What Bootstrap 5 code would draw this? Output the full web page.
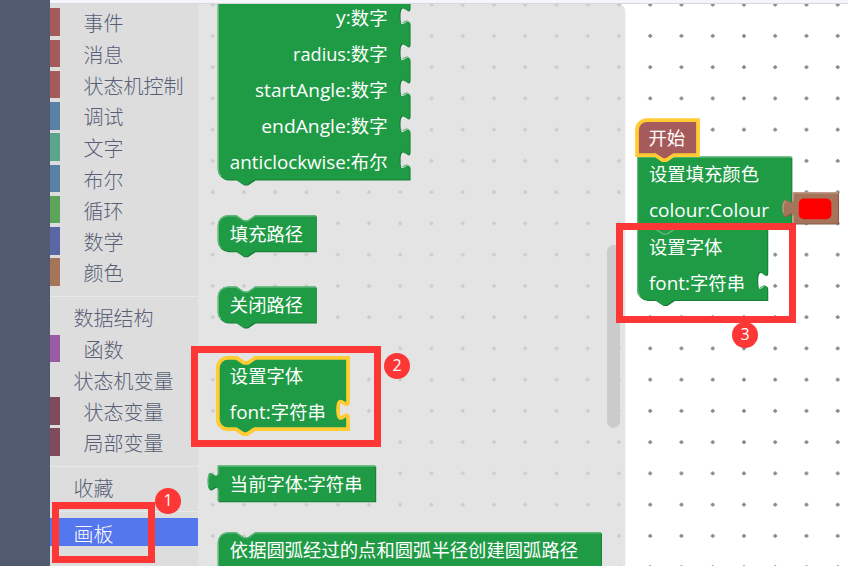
<!DOCTYPE html>
<html lang="zh-CN">
<head>
<meta charset="utf-8">
<meta name="viewport" content="width=device-width, initial-scale=1">
<title>画板</title>
<link href="https://cdn.jsdelivr.net/npm/bootstrap@5.3.0/dist/css/bootstrap.min.css" rel="stylesheet">
<style>
body{font-family:"Open Sans","Noto Sans CJK SC",sans-serif;background:#fff}
.topline{height:4px;background:#f5f6f9;border-bottom:1px solid #d6d8dd}
.rail{width:50px;background:#515a6e}
.toolbox{width:148px;background:#ddd;padding-top:4.4px;color:#575e75}
.cat{height:27.5px;margin-bottom:3.75px;padding-left:23.5px;border-left:0 solid;font-family:"Noto Sans CJK SC",sans-serif;font-weight:300;font-size:20px;line-height:29.5px;white-space:nowrap}
.cat.bar{border-left-width:10px}
.c-red{border-color:#a55b5b}.c-blue{border-color:#5b80a5}.c-teal{border-color:#5ba58c}.c-green{border-color:#5ba55b}
.c-indigo{border-color:#5b67a5}.c-brown{border-color:#a5745b}.c-purple{border-color:#995ba5}.c-wine{border-color:#804a5f}
.cat.chosen{background:#5577ee;color:#fff;line-height:31px}
.rule{height:1.25px;margin:10px 0 6.25px;background:#e8e8e8}
.canvas{display:block;width:650px;height:562px}
.canvas text{font-family:"Open Sans","Noto Sans CJK SC",sans-serif;font-size:18.33px;fill:#fff}
.canvas .zh{font-family:"Noto Sans CJK SC",sans-serif}
.g{fill:#1f9b45}.gd{fill:#197c37}.gl{fill:none;stroke:#62b97d;stroke-width:1}
.sel{stroke:#fc3;stroke-width:3}
.frame{border:7px solid #fd3736}
.num{width:26px;height:26px;background:#fd3736;color:#fff;font-size:16px;line-height:24px}
.f1{left:52px;top:502px;width:103px;height:61px}.n1{left:155px;top:488px}
.f2{left:191px;top:346px;width:190px;height:101px}.n2{left:384px;top:353px}
.f3{left:616px;top:223px;width:180px;height:100px}.n3{left:732px;top:322px}
</style>
<script src="https://cdn.jsdelivr.net/npm/bootstrap@5.3.0/dist/js/bootstrap.bundle.min.js"></script>
</head>
<body class="vh-100 overflow-hidden position-relative">
<div class="d-flex h-100">
  <aside class="rail flex-shrink-0"></aside>
  <main class="flex-grow-1 d-flex flex-column">
    <div class="topline flex-shrink-0"></div>
    <div class="d-flex flex-grow-1 overflow-hidden">
      <nav class="toolbox flex-shrink-0">
        <div class="cat bar c-red">事件</div>
        <div class="cat bar c-red">消息</div>
        <div class="cat bar c-red">状态机控制</div>
        <div class="cat bar c-blue">调试</div>
        <div class="cat bar c-teal">文字</div>
        <div class="cat bar c-blue">布尔</div>
        <div class="cat bar c-green">循环</div>
        <div class="cat bar c-indigo">数学</div>
        <div class="cat bar c-brown">颜色</div>
        <div class="rule"></div>
        <div class="cat">数据结构</div>
        <div class="cat bar c-purple">函数</div>
        <div class="cat">状态机变量</div>
        <div class="cat bar c-wine">状态变量</div>
        <div class="cat bar c-wine">局部变量</div>
        <div class="rule"></div>
        <div class="cat">收藏</div>
        <div class="rule"></div>
        <div class="cat chosen">画板</div>
      </nav>
      <svg class="canvas flex-shrink-0" viewBox="198 4 650 562">
        <defs>
          <pattern id="dots" x="197.1" y="-11" width="31.25" height="31.25" patternUnits="userSpaceOnUse"><path d="M13.6 15.7h4M15.6 13.7v4" stroke="#888" stroke-width="1.6"/><circle cx="15.6" cy="15.7" r="1.4" fill="#888"/></pattern>
          <path id="arc" d="M0,-40 H153.5 V5.2 c0,10 -8,-8 -8,7.5 s8,-2.5 8,7.5 V34 c0,10 -8,-8 -8,7.5 s8,-2.5 8,7.5 v13.8 c0,10 -8,-8 -8,7.5 s8,-2.5 8,7.5 v13.8 c0,10 -8,-8 -8,7.5 s8,-2.5 8,7.5 v13.8 c0,10 -8,-8 -8,7.5 s8,-2.5 8,7.5 V143.5 H29.5 l-6,4 -3,0 -6,-4 H8 a8,8 0 0 1 -8,-8 z"/>
          <path id="one" d="M0,8 A8,8 0 0 1 8,0 H15 l6,4 3,0 6,-4 H78.5 V28.7 H29.5 l-6,4 -3,0 -6,-4 H8 a8,8 0 0 1 -8,-8 z"/>
          <path id="onelight" d="M2.7,26.1 A7.5,7.5 0 0 1 .5,21 V8 A7.5,7.5 0 0 1 8,.5 H15 l6,4 3,0 6,-4 H78.5"/>
        </defs>
        <rect x="198" y="4" width="650" height="562" fill="url(#dots)"/>
        <path d="M198,4 H619 a8,8 0 0 1 6.3,8 V566 H198z" fill="#ddd" fill-opacity=".8"/>
        <rect x="607" y="245" width="13" height="183" rx="6.5" fill="#cbcbcb"/>

        <g transform="translate(217.7,0) scale(1.25)">
          <use href="#arc" class="gd" transform="translate(.8,.8)"/><use href="#arc" class="g"/>
          <path class="gl" d="M2.7,141 A7.5,7.5 0 0 1 .5,135.5 V0 M147.8,18.2 l4,-1.8 M147.8,47 l4,-1.8 M147.8,75.8 l4,-1.8 M147.8,104.6 l4,-1.8 M147.8,133.4 l4,-1.8"/>
        </g>

        <g transform="translate(217.7,215.3) scale(1.25)"><use href="#one" class="gd" transform="translate(.8,.8)"/><use href="#one" class="g"/><use href="#onelight" class="gl"/></g>
        <g transform="translate(217.7,286.6) scale(1.25)"><use href="#one" class="gd" transform="translate(.8,.8)"/><use href="#one" class="g"/><use href="#onelight" class="gl"/></g>
        <path class="g sel" transform="translate(217.8,357.9) scale(1.25)" d="M0,8 A8,8 0 0 1 8,0 H15 l6,4 3,0 6,-4 H104.2 V34 c0,10 -8,-8 -8,7.5 s8,-2.5 8,7.5 V57 H29.5 l-6,4 -3,0 -6,-4 H8 a8,8 0 0 1 -8,-8 z"/>
        <g transform="translate(217.7,465.6) scale(1.25)">
          <path class="gd" transform="translate(.8,.8)" d="M0,0 H126 V28.5 H0 V20 c0,-10 -8,8 -8,-7.5 s8,2.5 8,-7.5 z"/>
          <path class="g" d="M0,0 H126 V28.5 H0 V20 c0,-10 -8,8 -8,-7.5 s8,2.5 8,-7.5 z"/>
          <path class="gl" d="M.5,28 V19 M-7.3,16 Q-8.5,8 -5.5,7.5 M.5,7 V.5 H126"/>
        </g>
        <g transform="translate(217.7,532.3) scale(1.25)">
          <path class="gd" transform="translate(.8,.8)" d="M0,8 A8,8 0 0 1 8,0 H15 l6,4 3,0 6,-4 H306.6 V40 H0z"/>
          <path class="g" d="M0,8 A8,8 0 0 1 8,0 H15 l6,4 3,0 6,-4 H306.6 V40 H0z"/>
          <path class="gl" d="M.5,40 V8 A7.5,7.5 0 0 1 8,.5 H15 l6,4 3,0 6,-4 H306.6"/>
        </g>

        <g transform="translate(637,156.5) scale(1.25)">
          <path class="gd" transform="translate(.8,.8)" d="M0,0 H123.5 V58 H0z"/>
          <path class="g" d="M0,0 H123.5 V58 H0z"/>
          <path class="gl" d="M.5,57 V.5 H123.5"/>
        </g>
        <g transform="translate(637,228.5) scale(1.25)">
          <path class="gd" transform="translate(.8,.8)" d="M0,0 H104.2 V34 c0,10 -8,-8 -8,7.5 s8,-2.5 8,7.5 V57.2 H29.5 l-6,4 -3,0 -6,-4 H8 a8,8 0 0 1 -8,-8 z"/>
          <path class="g" d="M0,0 H104.2 V34 c0,10 -8,-8 -8,7.5 s8,-2.5 8,7.5 V57.2 H29.5 l-6,4 -3,0 -6,-4 H8 a8,8 0 0 1 -8,-8 z"/>
          <path class="gl" d="M2.7,54.5 A7.5,7.5 0 0 1 .5,49 V.5 H15 l6,4 3,0 6,-4 H104"/>
          <path class="gl" d="M98.5,47.3 L102.5,45.5"/>
        </g>
        <path class="sel" fill="#a55b5b" transform="translate(637,120) scale(1.25)" d="M0,8 A8,8 0 0 1 8,0 H48.8 V28 H29.5 l-6,4 -3,0 -6,-4 H0z"/>
        <g transform="translate(792.6,192.3) scale(1.25)">
          <path fill="#845d49" transform="translate(.8,.8)" d="M0,0 H36.3 V25 H0 V20 c0,-10 -8,8 -8,-7.5 s8,2.5 8,-7.5 z"/>
          <path fill="#a5745b" d="M0,0 H36.3 V25 H0 V20 c0,-10 -8,8 -8,-7.5 s8,2.5 8,-7.5 z"/>
          <path fill="none" stroke="#c09e8c" d="M.5,25 V19 M-7.3,16 Q-8.5,8 -5.5,7.5 M.5,7 V.5 H36.3"/>
          <rect x="5" y="5" width="26" height="16.5" rx="4" fill="red"/>
        </g>

        <text x="336" y="24" textLength="14.8" lengthAdjust="spacingAndGlyphs">y:</text><text class="zh" x="350.8" y="24.5">数字</text>
        <text x="293" y="61" textLength="57.8" lengthAdjust="spacingAndGlyphs">radius:</text><text class="zh" x="350.8" y="60.5">数字</text>
        <text x="255" y="97" textLength="95.8" lengthAdjust="spacingAndGlyphs">startAngle:</text><text class="zh" x="350.8" y="96.5">数字</text>
        <text x="261.3" y="133" textLength="89.5" lengthAdjust="spacingAndGlyphs">endAngle:</text><text class="zh" x="350.8" y="132.5">数字</text>
        <text x="229.8" y="168.5" textLength="121" lengthAdjust="spacingAndGlyphs">anticlockwise:</text><text class="zh" x="350.8" y="168.5">布尔</text>
        <text class="zh" x="229.8" y="241">填充路径</text>
        <text class="zh" x="229.8" y="312.3">关闭路径</text>
        <text class="zh" x="229.8" y="383">设置字体</text>
        <text x="229.8" y="418.5" textLength="41" lengthAdjust="spacingAndGlyphs">font:</text><text class="zh" x="270.8" y="418.5">字符串</text>
        <text class="zh" x="229.8" y="490.5">当前字体</text><text x="303" y="490">:</text><text class="zh" x="307.5" y="490.5">字符串</text>
        <text class="zh" x="229.8" y="557">依据圆弧经过的点和圆弧半径创建圆弧路径</text>
        <text class="zh" x="648.5" y="145">开始</text>
        <text class="zh" x="649" y="181">设置填充颜色</text>
        <text x="649" y="216.5" textLength="120" lengthAdjust="spacingAndGlyphs">colour:Colour</text>
        <text class="zh" x="649" y="254">设置字体</text>
        <text x="649" y="289.5" textLength="41" lengthAdjust="spacingAndGlyphs">font:</text><text class="zh" x="690" y="289.5">字符串</text>
      </svg>
    </div>
  </main>
</div>
<div class="frame f1 position-absolute"></div><div class="num n1 position-absolute rounded-circle text-center">1</div>
<div class="frame f2 position-absolute"></div><div class="num n2 position-absolute rounded-circle text-center">2</div>
<div class="frame f3 position-absolute"></div><div class="num n3 position-absolute rounded-circle text-center">3</div>
</body>
</html>
